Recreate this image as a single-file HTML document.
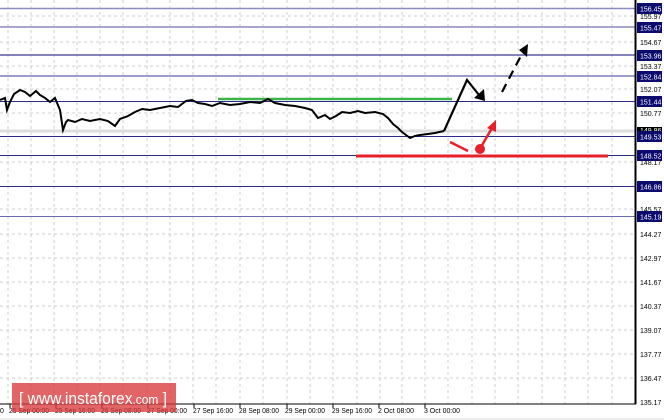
<!DOCTYPE html><html><head><style>body{margin:0;background:#fff}svg{display:block;font-family:"Liberation Sans",sans-serif}</style></head><body>
<svg width="664" height="420" xmlns="http://www.w3.org/2000/svg">
<rect width="664" height="420" fill="#fff"/>
<g stroke="#cfcfcf" stroke-dasharray="3,3" stroke-width="1">
<line x1="0" y1="16" x2="635" y2="16"/><line x1="0" y1="42" x2="635" y2="42"/><line x1="0" y1="66" x2="635" y2="66"/><line x1="0" y1="89" x2="635" y2="89"/><line x1="0" y1="113" x2="635" y2="113"/><line x1="0" y1="162" x2="635" y2="162"/><line x1="0" y1="209" x2="635" y2="209"/><line x1="0" y1="234" x2="635" y2="234"/><line x1="0" y1="258" x2="635" y2="258"/><line x1="0" y1="282" x2="635" y2="282"/><line x1="0" y1="306" x2="635" y2="306"/><line x1="0" y1="330" x2="635" y2="330"/><line x1="0" y1="354" x2="635" y2="354"/><line x1="0" y1="378" x2="635" y2="378"/>
<line x1="8" y1="0" x2="8" y2="404"/><line x1="31" y1="0" x2="31" y2="404"/><line x1="54" y1="0" x2="54" y2="404"/><line x1="77" y1="0" x2="77" y2="404"/><line x1="100" y1="0" x2="100" y2="404"/><line x1="123" y1="0" x2="123" y2="404"/><line x1="147" y1="0" x2="147" y2="404"/><line x1="170" y1="0" x2="170" y2="404"/><line x1="193" y1="0" x2="193" y2="404"/><line x1="216" y1="0" x2="216" y2="404"/><line x1="240" y1="0" x2="240" y2="404"/><line x1="263" y1="0" x2="263" y2="404"/><line x1="287" y1="0" x2="287" y2="404"/><line x1="310" y1="0" x2="310" y2="404"/><line x1="333" y1="0" x2="333" y2="404"/><line x1="357" y1="0" x2="357" y2="404"/><line x1="380" y1="0" x2="380" y2="404"/><line x1="402" y1="0" x2="402" y2="404"/><line x1="425" y1="0" x2="425" y2="404"/><line x1="448" y1="0" x2="448" y2="404"/><line x1="472" y1="0" x2="472" y2="404"/><line x1="495" y1="0" x2="495" y2="404"/><line x1="518" y1="0" x2="518" y2="404"/><line x1="542" y1="0" x2="542" y2="404"/><line x1="565" y1="0" x2="565" y2="404"/><line x1="588" y1="0" x2="588" y2="404"/><line x1="612" y1="0" x2="612" y2="404"/>
</g>
<line x1="0" y1="131" x2="635" y2="131" stroke="#ddd" stroke-width="3"/>
<g stroke="#2a2a8a" stroke-width="1">
<line x1="0" y1="8.5" x2="635" y2="8.5" stroke="#8a8ac4" stroke-width="1.5"/><line x1="0" y1="27" x2="635" y2="27" stroke="#8a8ac4" stroke-width="1.5"/><line x1="0" y1="55" x2="635" y2="55" stroke="#5a5aa8" stroke-width="1.5"/><line x1="0" y1="76" x2="635" y2="76" stroke="#7a7abb" stroke-width="1.5"/><line x1="0" y1="101.5" x2="635" y2="101.5"/><line x1="0" y1="136.5" x2="635" y2="136.5"/><line x1="0" y1="155.5" x2="635" y2="155.5"/><line x1="0" y1="186.5" x2="635" y2="186.5"/><line x1="0" y1="216.5" x2="635" y2="216.5" stroke="#6a6ab0"/>
</g>
<line x1="218" y1="99" x2="452" y2="99" stroke="#3cb44a" stroke-width="2.5"/>
<line x1="356" y1="156" x2="608" y2="156" stroke="#e8202a" stroke-width="3"/>
<polyline fill="none" stroke="#000" stroke-width="2" points="0,100 5,98 7,110 10,102 14,94 20,90 25,92 30,96 36,91 40,95 45,98 50,102 55,98 60,110 63,130 66,122 68,120 75,122 82,119 90,121 100,119 108,121 115,126 120,119 128,116 135,112 142,109 150,110 160,108 170,106 178,107 186,101 192,100 198,103 205,104 212,106 220,103 230,105 240,104 250,102 260,103 268,99 275,103 285,105 295,106 305,108 312,110 318,118 325,115 330,119 336,116 342,112 350,113 358,111 365,113 375,112 383,114 388,118 393,124 398,128 402,132 406,135 410,138 415,136 420,135 428,134 435,133 444,131"/>
<polyline fill="none" stroke="#000" stroke-width="2.2" points="444,131 467,80 479,95"/>
<polygon points="474,98 485,101 484,89" fill="#000"/>
<line x1="502" y1="92" x2="524" y2="50" stroke="#000" stroke-width="2.2" stroke-dasharray="9,6"/>
<polygon points="519,50 528,44 527,57" fill="#000"/>
<line x1="450" y1="142" x2="468" y2="151" stroke="#e8202a" stroke-width="2.5"/>
<circle cx="480" cy="149" r="5" fill="#e8202a"/>
<line x1="481" y1="147" x2="492" y2="128" stroke="#e8202a" stroke-width="2.5"/>
<polygon points="487,128 496,120 496,132" fill="#e8202a"/>
<line x1="0" y1="404" x2="636" y2="404" stroke="#000"/>
<line x1="635.5" y1="0" x2="635.5" y2="404" stroke="#000" stroke-width="2"/>
<g stroke="#000"><line x1="10" y1="404" x2="10" y2="408"/><line x1="56" y1="404" x2="56" y2="408"/><line x1="102" y1="404" x2="102" y2="408"/><line x1="148" y1="404" x2="148" y2="408"/><line x1="194" y1="404" x2="194" y2="408"/><line x1="240" y1="404" x2="240" y2="408"/><line x1="287" y1="404" x2="287" y2="408"/><line x1="333" y1="404" x2="333" y2="408"/><line x1="379" y1="404" x2="379" y2="408"/><line x1="425" y1="404" x2="425" y2="408"/></g>
<g font-size="7" fill="#000">
<text x="0" y="413">0</text><text x="9" y="413" textLength="40" lengthAdjust="spacingAndGlyphs">25 Sep 00:00</text><text x="55" y="413" textLength="40" lengthAdjust="spacingAndGlyphs">25 Sep 16:00</text><text x="101" y="413" textLength="40" lengthAdjust="spacingAndGlyphs">26 Sep 08:00</text><text x="147" y="413" textLength="40" lengthAdjust="spacingAndGlyphs">27 Sep 00:00</text><text x="193" y="413" textLength="40" lengthAdjust="spacingAndGlyphs">27 Sep 16:00</text><text x="239" y="413" textLength="40" lengthAdjust="spacingAndGlyphs">28 Sep 08:00</text><text x="285" y="413" textLength="40" lengthAdjust="spacingAndGlyphs">29 Sep 00:00</text><text x="332" y="413" textLength="40" lengthAdjust="spacingAndGlyphs">29 Sep 16:00</text><text x="378" y="413" textLength="36" lengthAdjust="spacingAndGlyphs">2 Oct 08:00</text><text x="424" y="413" textLength="36" lengthAdjust="spacingAndGlyphs">3 Oct 00:00</text>
</g>
<g font-size="7" fill="#000">
<text x="640" y="19">155.97</text><text x="640" y="45">154.67</text><text x="640" y="69">153.37</text><text x="640" y="92">152.07</text><text x="640" y="116">150.77</text><text x="640" y="165">148.17</text><text x="640" y="212">145.57</text><text x="640" y="237">144.27</text><text x="640" y="261">142.97</text><text x="640" y="285">141.67</text><text x="640" y="309">140.37</text><text x="640" y="333">139.07</text><text x="640" y="357">137.77</text><text x="640" y="381">136.47</text><text x="640" y="405">135.17</text>
</g>
<g font-size="7">
<rect x="637" y="3" width="25" height="11" fill="#0b0b6e"/><text x="640" y="11.5" fill="#fff">156.45</text>
<rect x="637" y="22" width="25" height="11" fill="#0b0b6e"/><text x="640" y="30.5" fill="#fff">155.47</text>
<rect x="637" y="50" width="25" height="11" fill="#0b0b6e"/><text x="640" y="58.5" fill="#fff">153.96</text>
<rect x="637" y="71" width="25" height="11" fill="#0b0b6e"/><text x="640" y="79.5" fill="#fff">152.84</text>
<rect x="637" y="96" width="25" height="11" fill="#0b0b6e"/><text x="640" y="104.5" fill="#fff">151.44</text>
<rect x="637" y="127" width="25" height="6" fill="#000"/><text x="640" y="133" fill="#fff">149.86</text>
<rect x="637" y="131" width="25" height="11" fill="#0b0b6e"/><text x="640" y="139.5" fill="#fff">149.53</text>
<rect x="637" y="150" width="25" height="11" fill="#0b0b6e"/><text x="640" y="158.5" fill="#fff">148.52</text>
<rect x="637" y="181" width="25" height="11" fill="#0b0b6e"/><text x="640" y="189.5" fill="#fff">146.86</text>
<rect x="637" y="211" width="25" height="11" fill="#0b0b6e"/><text x="640" y="219.5" fill="#fff">145.19</text>
</g>
<rect x="12" y="383" width="164" height="29" fill="#d9383c" opacity="0.78"/>
<text x="19" y="404" font-size="17" fill="#fff" textLength="148" lengthAdjust="spacingAndGlyphs">[  www.instaforex<tspan font-size="13">.com</tspan> ]</text>
<rect x="0" y="418" width="664" height="2" fill="#eee"/>
</svg>
</body></html>
